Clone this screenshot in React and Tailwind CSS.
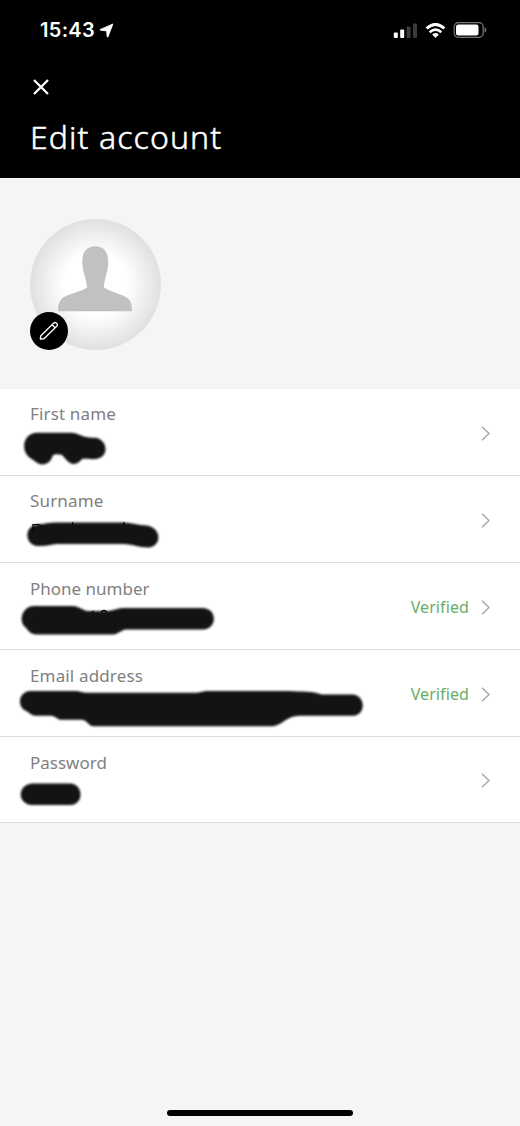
import React from 'react';

const rows = [
  {
    label: 'First name',
    labelClass: 'pt-[12px] tracking-[0.15px]',
    scribble:
      'M37 43.7 H71 C77 44 80 46.5 86 48 C91 49 93 48.5 97 49 C109 53 108 69 96 70 C90 70.5 87 69.5 82 70 C79 74 76 75 73 75 C68 74 66 70 62 66 Q57 64.5 53 66 C51 72 48 75.5 42 75.5 C37 75 34 71 30 69 C20 62 23 44 37 43.7 Z',
  },
  {
    label: 'Surname',
    labelClass: 'pt-[12px] tracking-[0.15px]',
    scribble:
      'M37 48.5 C44 48 49 46.5 57 46.5 H123 C132 47 138 49 147 49.5 C162 52 162 71 148 71.5 C139 71.5 134 68.5 123 68 H57 C51 68.5 46 70.5 38 70 C24 69 24 50 37 48.5 Z',
    peek: 'M33 54 V48.5 H37.5 Q40 48.5 41 50.5 M72.5 46 V49 M124 46 V49',
  },
  {
    label: 'Phone number',
    labelClass: 'pt-[13px]',
    scribble:
      'M34 43 H73 C79 43.5 82 47 87 48 H107 C112 48 116 45.5 123 45 H203 C218 46 217 66 203 66.5 H126 C121 67 119 71 113 71.5 H36 C29 71 28 66 24 63 C18 55 24 43 34 43 Z',
    peek: 'M92 49.5 L93.5 48 M101 49 Q104 46 107 49',
    verified: true,
  },
  {
    label: 'Email address',
    labelClass: 'pt-[13px] tracking-[0.15px]',
    scribble:
      'M30 41 H77 L85 42.7 H197 L206 41 H290 C302 42 312 41 322 44.5 H353 C366 46 366 65 353 65.7 H300 C285 66 283 76 271 76.3 H94 C88 76 88 70 81 69.7 H61 C56 69 56 66 51 65.7 H35 C30 65 28 61 24 60 C16 53 21 41 30 41 Z',
    verified: true,
  },
  {
    label: 'Password',
    labelClass: 'pt-[13px]',
    scribble: 'M32 46.5 H70 C84 47 84 68 70 68 H32 C17 67 17 48 32 46.5 Z',
  },
];

function StatusBar() {
  return (
    <div className="flex h-[60px] items-center pl-[40px] pr-[33px]">
      <span className="font-['Inter'] text-[20px] font-semibold leading-none tracking-[0.3px]">
        15:43
      </span>
      <svg className="ml-[4px] h-[15px] w-[15px]" viewBox="0 0 14 14" fill="currentColor" stroke="currentColor" strokeWidth=".7" strokeLinejoin="round">
        <path d="M13 .9 8.4 13 7.6 13 7.1 7.4 1.1 6.7 1.1 6Z" />
      </svg>

      <div className="ml-auto flex items-center">
        <svg className="h-[16px] w-[24px]" viewBox="0 0 24 16" fill="currentColor">
          <rect x="0.8" y="10.5" width="4" height="5.5" rx="1" />
          <rect x="7.2" y="7.5" width="4" height="8.5" rx="1" />
          <rect x="13.6" y="4.5" width="4" height="11.5" rx="1" className="text-[#3b3b3b]" />
          <rect x="20" y="1.5" width="4" height="14.5" rx="1" className="text-[#3b3b3b]" />
        </svg>
        <svg className="ml-[8px] h-[15px] w-[21px]" viewBox="0 0 22 16" fill="none" stroke="currentColor">
          <path d="M1.5 5.8Q11-2.7 20.5 5.8" strokeWidth="3" />
          <path d="M4.8 9.8Q11 4.4 17.2 9.8" strokeWidth="2.8" />
          <path d="M7.4 12.2Q11 9.2 14.6 12.2L11 16Z" fill="currentColor" stroke="none" />
        </svg>
        <svg className="ml-[7px] h-[16px] w-[34px]" viewBox="0 0 34 16">
          <rect x="1.2" y=".7" width="29" height="14.6" rx="4" fill="none" stroke="#777" strokeWidth="1.2" />
          <rect x="3" y="2.5" width="22.5" height="11" rx="2.3" fill="#fff" />
          <path d="M31.6 5.3Q33.4 6 33.4 8T31.6 10.7Z" fill="#777" />
        </svg>
      </div>
    </div>
  );
}

function Avatar() {
  return (
    <div className="relative h-[131px] w-[131px] rounded-full bg-[radial-gradient(circle_closest-side,#ffffff_0%,#ffffff_48%,#ececec_80%,#e0e0e0_100%)]">
      <svg className="h-full w-full" viewBox="0 0 131 131" fill="#c1c1c1">
        <path d="M65.2 27.3C74 27.3 78.6 33.5 78.2 44C77.9 54 74.3 59 74 68.3Q74.5 69.5 79 71.2L94 77Q102.5 80 102 92.3H28Q27.5 80 37 76.6L52 71.2Q56.4 69.5 57 68.3C56.5 59 52.6 54 52.3 44C51.8 33.5 56.4 27.3 65.2 27.3Z" />
      </svg>
      <button className="absolute bottom-0 left-0 flex h-[38px] w-[38px] items-center justify-center rounded-full bg-black">
        <svg className="h-[20px] w-[20px]" viewBox="0 0 20 20" fill="none" stroke="#fff" strokeWidth="1.3" strokeLinejoin="round">
          <path d="M1.3 18 1.8 14.8 14.8 2Q16 1 17.2 2L18 2.8Q19 4 18 5L5 17.8ZM13 3.8 16.2 6.8" />
        </svg>
      </button>
    </div>
  );
}

function AccountRow({ label, labelClass, scribble, peek, verified }) {
  return (
    <div className="relative flex h-[87px] border-b border-[#dcdcdc] bg-white pl-[30px] pr-[30px] last:h-[86px]">
      <div className={labelClass}>
        <span className="block text-[17px] leading-[26px] text-[#7f7f7f]">{label}</span>
      </div>
      <svg className="absolute left-0 top-0 h-[86px] w-[400px]" viewBox="0 0 400 86">
        <path d={scribble} fill="#141213" className="blur-[1.2px]" />
        {peek && <path d={peek} fill="none" stroke="#000" strokeWidth="1.2" />}
      </svg>
      <div className="ml-auto flex items-center gap-[12px] pt-[2px]">
        {verified && (
          <span className="text-[16px] leading-none tracking-[0.1px] text-[#68ad68]">Verified</span>
        )}
        <svg className="h-[15px] w-[9px]" viewBox="0 0 9 15" fill="none" stroke="#a6a6a6" strokeWidth="1.4">
          <path d="M1 .8 8 7.5 1 14.2" />
        </svg>
      </div>
    </div>
  );
}

export default function App() {
  return (
    <div className="flex h-[1126px] w-[520px] flex-col overflow-hidden bg-[#f5f5f5] font-['Noto_Sans',sans-serif]">
      <header className="h-[178px] bg-black text-white">
        <StatusBar />
        <button className="ml-[33px] mt-[19px] block h-[16px] w-[16px]">
          <svg className="h-full w-full" viewBox="0 0 16 16" stroke="currentColor" strokeWidth="2.3">
            <path d="M1 1 15 15M15 1 1 15" />
          </svg>
        </button>
        <h1 className="ml-[30px] mt-[21px] text-[32px] font-light leading-[42px] tracking-[1.1px] [-webkit-text-stroke:0.5px_white]">
          Edit account
        </h1>
      </header>

      <section className="h-[211px] pl-[30px] pt-[41px]">
        <Avatar />
      </section>

      <main>
        {rows.map((row) => (
          <AccountRow key={row.label} {...row} />
        ))}
      </main>

      <div className="mx-auto mb-[10px] mt-auto h-[6px] w-[186px] rounded-full bg-black" />
    </div>
  );
}
